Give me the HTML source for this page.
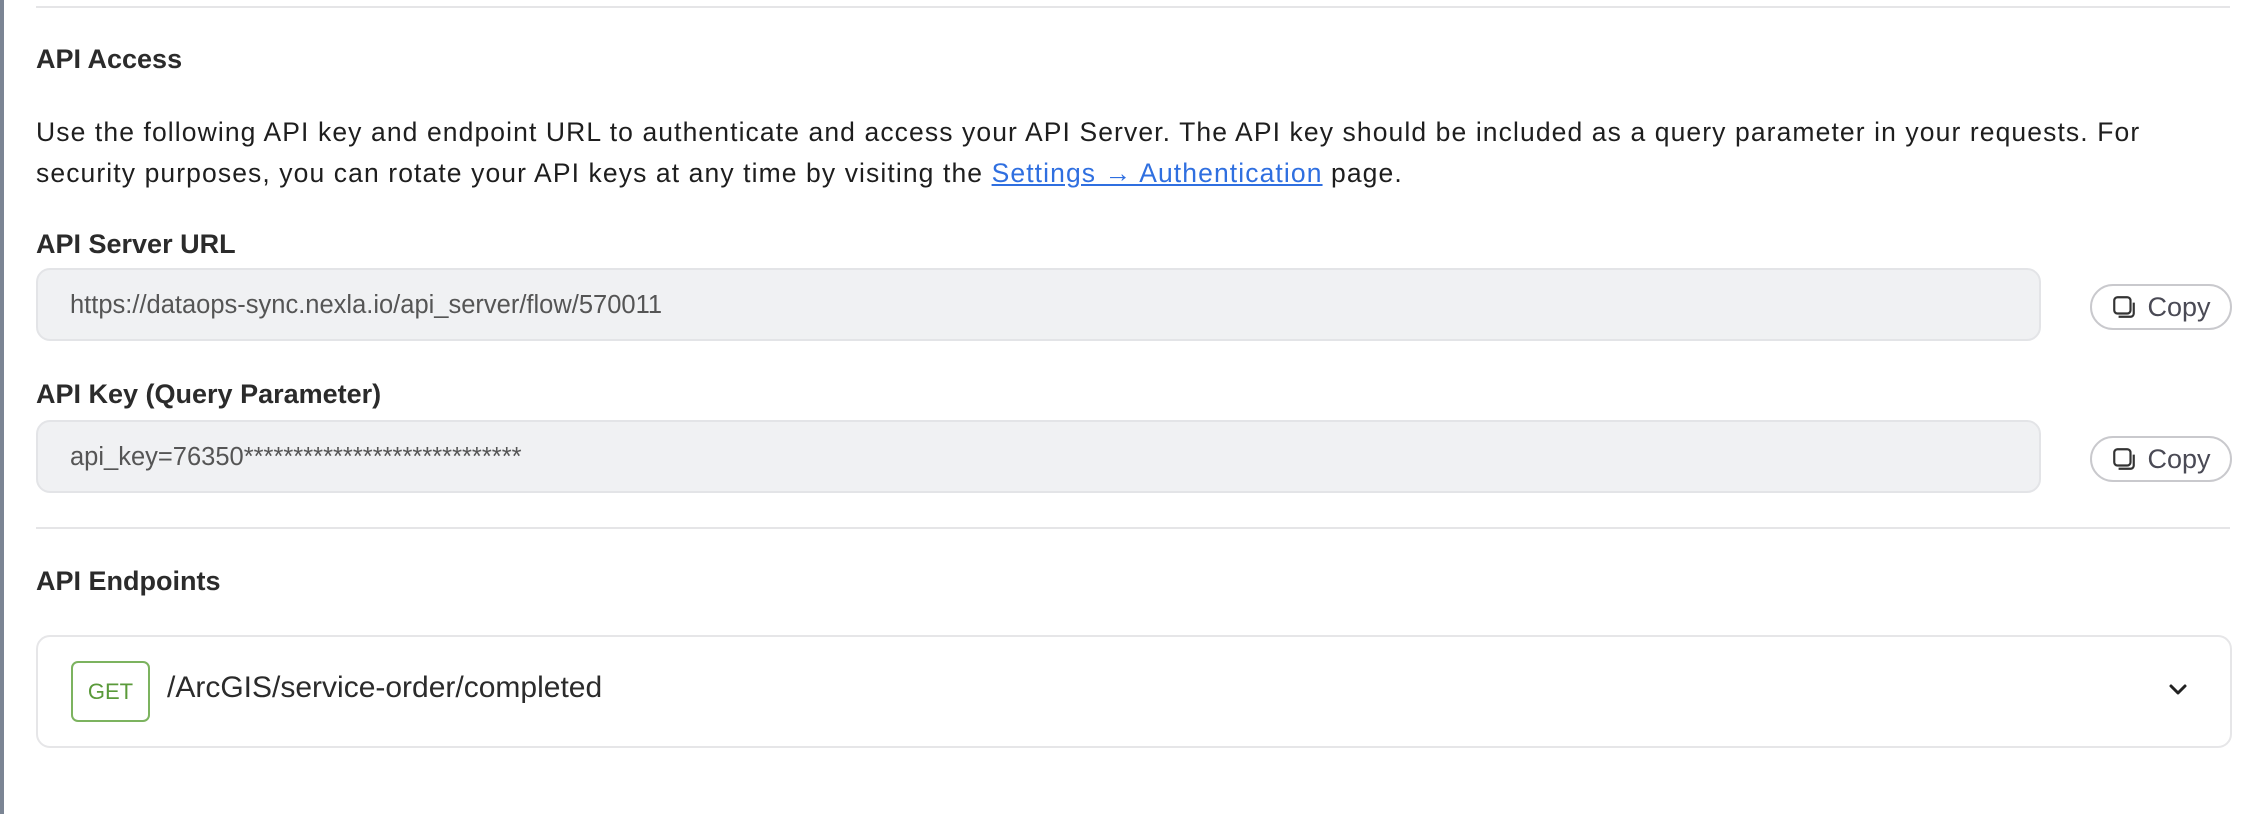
<!DOCTYPE html>
<html><head><meta charset="utf-8"><style>
body{margin:0;width:2262px;height:814px;background:#fff;font-family:"Liberation Sans",sans-serif;color:#222;position:relative;overflow:hidden}
.abs{position:absolute}
.stripe{left:0;top:0;width:4px;height:814px;background:#7b8594}
.hr{left:36px;right:32px;height:2px;background:#e5e5e7}
h3{margin:0;position:absolute;left:36px;font-size:27px;font-weight:bold;color:#2b2b2b}
p{margin:0;position:absolute;left:36px;top:112px;width:2160px;font-size:26.5px;letter-spacing:1.1px;line-height:41px;color:#1e1e1e}
a{color:#2f6fe0;text-decoration:underline}
.inp{left:36px;width:2005px;height:73px;background:#f0f1f3;border:2px solid #e3e4e7;border-radius:14px;box-sizing:border-box;font-size:25.5px;color:#555;padding-left:32px;line-height:70px}
.copy{left:2090px;width:142px;height:46px;border:2px solid #c9c9cd;border-radius:24px;box-sizing:border-box;font-size:27px;color:#4a4a55;display:flex;align-items:center;justify-content:center;gap:10px}
.card{left:36px;right:30px;top:635px;height:113px;border:2px solid #e6e6e8;border-radius:14px;box-sizing:border-box}
</style></head><body>
<div class="abs stripe"></div>
<div class="abs hr" style="top:6px"></div>
<h3 style="top:44px">API Access</h3>
<p>Use the following API key and endpoint URL to authenticate and access your API Server. The API key should be included as a query parameter in your requests. For security purposes, you can rotate your API keys at any time by visiting the <a>Settings → Authentication</a> page.</p>
<h3 style="top:229px">API Server URL</h3>
<div class="abs inp" style="top:268px">https://dataops-sync.nexla.io/api_server/flow/570011</div>
<div class="abs copy" style="top:284px"><svg width="26" height="26" viewBox="0 0 24 24" fill="none" stroke="#333" stroke-width="2"><rect x="3" y="3" width="15" height="15" rx="3"/><path d="M21 8v10a3 3 0 0 1-3 3H7"/></svg>Copy</div>
<h3 style="top:379px">API Key (Query Parameter)</h3>
<div class="abs inp" style="top:420px">api_key=76350****************************</div>
<div class="abs copy" style="top:436px"><svg width="26" height="26" viewBox="0 0 24 24" fill="none" stroke="#333" stroke-width="2"><rect x="3" y="3" width="15" height="15" rx="3"/><path d="M21 8v10a3 3 0 0 1-3 3H7"/></svg>Copy</div>
<div class="abs hr" style="top:527px"></div>
<h3 style="top:566px">API Endpoints</h3>
<div class="abs card"></div>
<div class="abs" style="left:71px;top:661px;width:79px;height:61px;border:2px solid #7cb35f;border-radius:7px;box-sizing:border-box;color:#5a9a3a;font-size:22px;line-height:57px;text-align:center">GET</div>
<div class="abs" style="left:167px;top:671px;font-size:30px;color:#2b2b2b">/ArcGIS/service-order/completed</div>
<svg class="abs" style="left:2166px;top:680px" width="24" height="20" viewBox="0 0 24 20" fill="none" stroke="#222" stroke-width="3" stroke-linecap="round" stroke-linejoin="round"><path d="M5 6l7 7 7-7"/></svg>
</body></html>
